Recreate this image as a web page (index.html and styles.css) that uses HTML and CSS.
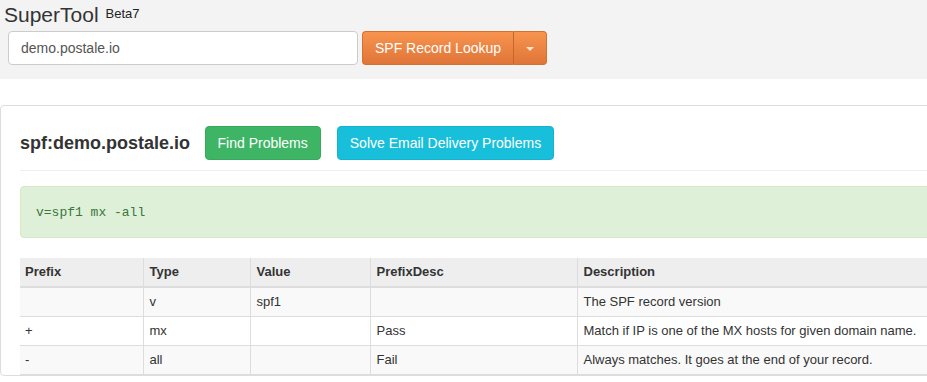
FILE: index.html
```html
<!DOCTYPE html>
<html>
<head>
<meta charset="utf-8">
<link rel="stylesheet" href="styles.css">
</head>
<body>
<header class="topbar">
  <h1 class="brand">SuperTool <span class="beta">Beta7</span></h1>
  <div class="search">
    <input class="search-input" type="text" value="demo.postale.io">
    <div class="btn-group">
      <button class="btn-orange btn-main">SPF Record Lookup</button>
      <button class="btn-orange btn-caret"><span class="caret"></span></button>
    </div>
  </div>
</header>
<main class="card">
  <div class="title-row">
    <h2 class="record-title">spf:demo.postale.io</h2>
    <button class="btn btn-green">Find Problems</button>
    <button class="btn btn-cyan">Solve Email Delivery Problems</button>
  </div>
  <hr class="divider">
  <div class="alert"><code>v=spf1 mx -all</code></div>
  <table class="spf-table">
    <colgroup>
      <col class="c1"><col class="c2"><col class="c3"><col class="c4"><col class="c5">
    </colgroup>
    <thead>
      <tr><th>Prefix</th><th>Type</th><th>Value</th><th>PrefixDesc</th><th>Description</th></tr>
    </thead>
    <tbody>
      <tr class="odd"><td></td><td>v</td><td>spf1</td><td></td><td>The SPF record version</td></tr>
      <tr><td>+</td><td>mx</td><td></td><td>Pass</td><td>Match if IP is one of the MX hosts for given domain name.</td></tr>
      <tr class="odd"><td>-</td><td>all</td><td></td><td>Fail</td><td>Always matches. It goes at the end of your record.</td></tr>
    </tbody>
  </table>
</main>
</body>
</html>
```

FILE: styles.css
```css
html, body {
  margin: 0;
  padding: 0;
  overflow: hidden;
}
body {
  font-family: "Liberation Sans", Arial, sans-serif;
  font-size: 14px;
  color: #333;
  background: #fff;
  width: 927px;
}
.topbar {
  background: #f3f3f3;
  height: 79px;
  box-sizing: border-box;
  padding: 2px 0 0 4px;
}
.brand {
  margin: 0;
  font-weight: normal;
  font-size: 21px;
  line-height: 25px;
  color: #333;
  display: flex;
  align-items: flex-start;
  gap: 7px;
}
.beta {
  font-size: 13px;
  line-height: 13px;
  color: #222;
  margin-top: 5px;
}
.search {
  display: flex;
  align-items: center;
  margin: 4px 0 0 4px;
  gap: 4px;
}
.search-input {
  width: 350px;
  height: 34px;
  box-sizing: border-box;
  border: 1px solid #ccc;
  border-radius: 4px;
  padding: 0 12px;
  font-family: "Liberation Sans", Arial, sans-serif;
  font-size: 14px;
  color: #555;
  background: #fff;
  outline: none;
}
.btn-group {
  display: flex;
}
.btn-orange {
  height: 34px;
  box-sizing: border-box;
  background: linear-gradient(#f8944f, #df7538);
  border: 1px solid #d5702f;
  color: #fff;
  font-family: "Liberation Sans", Arial, sans-serif;
  font-size: 14px;
  margin: 0;
  white-space: nowrap;
}
.btn-main {
  width: 152px;
  padding: 0 11px;
  border-radius: 4px 0 0 4px;
  border-right-color: #c8652a;
}
.btn-caret {
  width: 33px;
  padding: 0;
  border-left: 0;
  border-radius: 0 4px 4px 0;
  display: flex;
  align-items: center;
  justify-content: center;
}
.caret {
  width: 0;
  height: 0;
  border-left: 4px solid transparent;
  border-right: 4px solid transparent;
  border-top: 4px solid #fce3d2;
  margin-top: 1px;
}
.card {
  margin-top: 26px;
  width: 1100px;
  border: 1px solid #ddd;
  border-radius: 4px;
  padding: 20px 19px 0 19px;
  box-sizing: border-box;
}
.title-row {
  display: flex;
  align-items: center;
  height: 34px;
}
.record-title {
  margin: 0 14.5px 0 0;
  font-size: 18px;
  font-weight: bold;
  color: #333;
  white-space: nowrap;
}
.btn {
  height: 34px;
  box-sizing: border-box;
  padding: 0 12px;
  border-radius: 4px;
  font-family: "Liberation Sans", Arial, sans-serif;
  font-size: 14px;
  color: #fff;
  margin: 0 16px 0 0;
  cursor: pointer;
  white-space: nowrap;
}
.btn-green {
  background: #3db565;
  border: 1px solid #35aa5c;
}
.btn-cyan {
  background: #18bfdb;
  border: 1px solid #15b2cd;
}
.divider {
  border: 0;
  border-top: 1px solid #eee;
  margin: 10px 0 15px 0;
}
.alert {
  background: #dff0d8;
  border: 1px solid #d6e9c6;
  border-radius: 4px;
  padding: 15px;
  line-height: 18px;
  color: #3c763d;
  margin-bottom: 20px;
}
.alert code {
  font-family: "Liberation Mono", "Courier New", monospace;
  font-size: 13px;
}
.spf-table {
  border-collapse: collapse;
  font-size: 13px;
  table-layout: fixed;
  width: 1040px;
}
.c1 { width: 123px; }
.c2 { width: 107px; }
.c3 { width: 120px; }
.c4 { width: 207px; }
.c5 { width: 483px; }
.spf-table th,
.spf-table td {
  text-align: left;
  padding: 4px 5px 4px 6px;
  line-height: 20px;
  border-left: 1px solid #ddd;
  vertical-align: top;
}
.spf-table th:first-child,
.spf-table td:first-child {
  border-left: 0;
  padding-left: 5px;
}
.spf-table th {
  background: #eee;
  font-weight: bold;
  border-bottom: 2px solid #ddd;
}
.spf-table td {
  border-bottom: 1px solid #ddd;
}
.spf-table tr.odd td {
  background: #f9f9f9;
}
```
